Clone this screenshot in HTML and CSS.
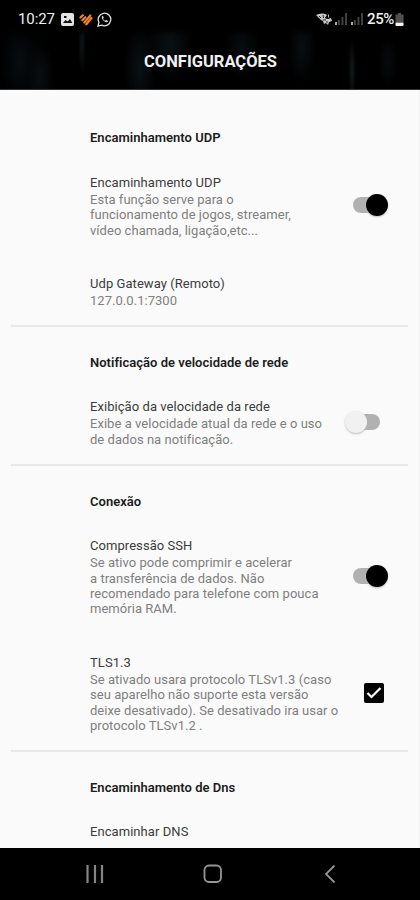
FILE: index.html
```html
<!DOCTYPE html>
<html lang="pt-BR">
<head>
<meta charset="utf-8">
<title>Configurações</title>
<link rel="stylesheet" href="styles.css">
</head>
<body>
<div class="screen">
  <header class="top">
    <div class="status">
      <span class="clock">10:27</span>
      <svg class="picture" width="13" height="13" viewBox="0 0 13 13"><rect width="13" height="13" rx="2" fill="#e4e4e4"/><path d="M2 10 4.600 7l2 1.500L9 6l2.300 4z" fill="#111"/><rect x="3" y="3" width="2.500" height="2" fill="#111"/></svg>
      <svg class="heart" width="14" height="13" viewBox="0 0 14 13" fill="none" stroke="#ee8136" stroke-width="2.200" stroke-linecap="round"><path d="M1.500 4.500 3.800 2.200M3.300 7.200 6.300 4.200M5.300 9.500 11.300 2.500M7.300 11.300l5.200-6.300"/></svg>
      <svg class="whats" width="15" height="15" viewBox="0 0 16 16" fill="none" stroke="#dedede" stroke-width="1.400"><path d="m1 15 1-4A6.700 6.700 0 1 1 5 14z"/><path d="M5.200 4.500c-.8 2.700 2.700 6.600 5.800 6.500l.8-1.500-2-1-1 .8C7.500 8.800 6.800 8 6.400 7.100l.8-.9-.8-1.900z" fill="#dedede" stroke="none"/></svg>
      <span class="spacer"></span>
      <svg class="net" width="16" height="13" viewBox="0 0 16 13"><path d="M0 2c4-2 8-2 11 0L9 5l3 1 3-1 1 3-3 1-1 3-2-2-2 1-1-3-2-1z" fill="#c8c8c8"/><path d="m3 3 2 2m2-3 .5 3m2-1 1 2M7 7h3m1 1v2" stroke="#222" fill="none"/><path d="M12.500 1.500v3" stroke="#bbb"/></svg>
      <svg class="signal" width="12" height="12" viewBox="0 0 12 12"><path d="M1 9v3" stroke="#bbb" stroke-width="1.800"/><path d="M4 7v5M7.500 4v8M11 0v12" stroke="#484848" stroke-width="1.800"/></svg>
      <svg class="signal" width="12" height="12" viewBox="0 0 12 12"><path d="M1 9v3" stroke="#bbb" stroke-width="1.800"/><path d="M4 7v5M7.500 4v8M11 0v12" stroke="#484848" stroke-width="1.800"/></svg>
      <span class="percent">25%</span>
      <svg class="battery" width="9" height="13" viewBox="0 0 9 13"><path d="M3 0h3v1.500h2.500V9h-8V1.500H3z" fill="#505050"/><path d="M.5 9.500h8V12a1 1 0 0 1-1 1h-6a1 1 0 0 1-1-1z" fill="#f4f4f4"/></svg>
    </div>
    <h1>CONFIGURAÇÕES</h1>
  </header>
  <main>
    <section>
      <h2>Encaminhamento UDP</h2>
      <div class="item"><div><h3>Encaminhamento UDP</h3><p>Esta função serve para o<br>funcionamento de jogos, streamer,<br>vídeo chamada, ligação,etc...</p></div><i class="switch on"></i></div>
      <div class="item"><div><h3>Udp Gateway (Remoto)</h3><p>127.0.0.1:7300</p></div></div>
    </section>
    <section>
      <h2>Notificação de velocidade de rede</h2>
      <div class="item"><div><h3>Exibição da velocidade da rede</h3><p>Exibe a velocidade atual da rede e o uso<br>de dados na notificação.</p></div><i class="switch"></i></div>
    </section>
    <section>
      <h2>Conexão</h2>
      <div class="item"><div><h3>Compressão SSH</h3><p>Se ativo pode comprimir e acelerar<br>a transferência de dados. Não<br>recomendado para telefone com pouca<br>memória RAM.</p></div><i class="switch on"></i></div>
      <div class="item"><div><h3>TLS1.3</h3><p>Se ativado usara protocolo TLSv1.3 (caso<br>seu aparelho não suporte esta versão<br>deixe desativado). Se desativado ira usar o<br>protocolo TLSv1.2 .</p></div>
        <svg class="check" width="20" height="20" viewBox="0 0 20 20"><rect width="20" height="20" rx="2" fill="#000"/><path d="m3.500 10 4 4 9-9" fill="none" stroke="#fff" stroke-width="2.200"/></svg></div>
    </section>
    <section>
      <h2>Encaminhamento de Dns</h2>
      <div class="item"><div><h3>Encaminhar DNS</h3></div></div>
    </section>
  </main>
  <nav>
    <svg width="18" height="18" viewBox="0 0 18 18"><path d="M1.500 0v18M9 0v18M16 0v18" stroke="#858585" stroke-width="2.200"/></svg>
    <svg class="home" width="20" height="20" viewBox="0 0 20 20"><rect x="1.500" y="1.500" width="16.500" height="16.500" rx="4.500" fill="none" stroke="#969696" stroke-width="1.800"/></svg>
    <svg width="12" height="18" viewBox="0 0 12 18"><path d="M10.500.5 2 9l8.500 8.500" fill="none" stroke="#969696" stroke-width="1.800"/></svg>
  </nav>
</div>
</body>
</html>
```
FILE: styles.css
```css
* { box-sizing: border-box; margin: 0; padding: 0; }
body { font-family: Roboto, sans-serif; background: #fafafa; }
.screen { width: 420px; height: 900px; display: flex; flex-direction: column; overflow: hidden; }
.top {
  height: 90px; flex: none; color: #f0f0f0; border-bottom: 1px solid #333;
  background:
    linear-gradient(#000 28px, transparent 36px),
    radial-gradient(ellipse 20px 40px at 20px 62px, #070d10, transparent),
    radial-gradient(ellipse 14px 35px at 40px 75px, #0a0f11, transparent),
    radial-gradient(ellipse 4px 30px at 82px 45px, #0e1517, transparent),
    radial-gradient(ellipse 16px 45px at 140px 68px, #0a1214, transparent),
    radial-gradient(ellipse 24px 38px at 170px 45px, #091114, transparent),
    radial-gradient(ellipse 18px 30px at 242px 48px, #070d10, transparent),
    radial-gradient(ellipse 14px 35px at 302px 48px, #0a0f11, transparent),
    radial-gradient(ellipse 4px 35px at 352px 70px, #12191c, transparent),
    radial-gradient(ellipse 10px 25px at 388px 62px, #070b0d, transparent), #000;
}
.status { height: 38px; display: flex; align-items: center; padding: 0 16px 0 18px; }
.clock { font-size: 15px; width: 43px; letter-spacing: -.1px; }
.heart { margin-left: 5px; }
.whats { margin-left: 4px; }
.spacer { flex: 1; }
.signal { margin-left: 4px; }
.net + .signal { margin-left: 3px; }
.percent { font-size: 15px; font-weight: 500; letter-spacing: -.4px; margin-left: 4px; }
.battery { margin-left: 1px; }
h1 { font-size: 16.5px; line-height: 22px; padding: 13px 0 0 1px; text-align: center; font-weight: 700; }
main { height: 758px; padding-top: 12.7px; background: #fafafa; overflow: hidden; border-right: 1px solid #f1f1f1; }
section { margin: 0 11px; }
section + section { border-top: 2px solid #e8e8e8; }
h2 { height: 52px; padding: 25.8px 0 0 79px; font-size: 13px; line-height: 19px; font-weight: 600; letter-spacing: .02px; color: #1c1c1c; }
.item { padding: 18px 19px 18px 79px; display: flex; justify-content: space-between; align-items: center; }
.item:last-child { padding-bottom: 17px; }
h3 { font-size: 13px; line-height: 19px; font-weight: 400; letter-spacing: .06px; color: #3c3c3c; white-space: nowrap; }
p { font-size: 13px; line-height: 15.4px; letter-spacing: .04px; color: #7f7f7f; white-space: nowrap; }
.switch { position: relative; flex: none; width: 27px; height: 16px; margin-right: 9px; border-radius: 8px; background: #b1b1b1; }
.switch::after { content: ""; position: absolute; width: 22px; height: 22px; top: -3px; left: -8px; border-radius: 50%; background: #f1f1f1; box-shadow: 0 1px 2px #bbb; }
.on::after { left: 13px; background: #000; }
.check { flex: none; margin-right: 5px; }
nav { height: 52px; flex: none; background: #000; display: flex; align-items: center; justify-content: space-between; padding: 0 84px 0 86px; }
.home { margin-right: 3px; }
```
